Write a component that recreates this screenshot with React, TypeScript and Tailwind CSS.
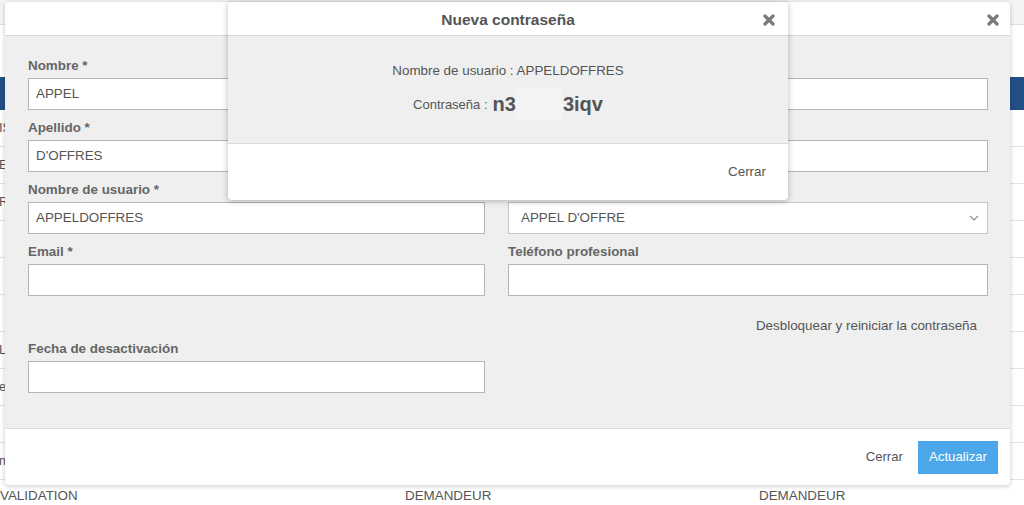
import { ReactNode } from 'react';

const rowTails = ['IS', 'ES', 'R', '', '', '', 'L', 'e', '', 'm'];

function CloseIcon() {
  return (
    <svg width="12" height="12" viewBox="0 0 12 12" aria-hidden="true">
      <path
        d="M2 2 L10 10 M10 2 L2 10"
        stroke="#7a7a7a"
        strokeWidth="3.2"
        strokeLinecap="round"
      />
    </svg>
  );
}

function Field({ label, children }: { label: string; children: ReactNode }) {
  return (
    <div>
      <div className="text-[13.4px] leading-[16px] font-bold text-[#666] mb-[4px] whitespace-nowrap">
        {label}
      </div>
      {children}
    </div>
  );
}

function TextBox({ value = '' }: { value?: string }) {
  return (
    <div className="h-[32px] border border-[#b5b5b5] bg-white px-[7px] flex items-center text-[13.4px] text-[#555]">
      {value}
    </div>
  );
}

function SelectBox({ value }: { value: string }) {
  return (
    <div className="h-[32px] border border-[#c4c4c4] bg-white pl-[12px] pr-[8px] flex items-center justify-between text-[13.4px] text-[#555]">
      <span>{value}</span>
      <svg width="10" height="6" viewBox="0 0 10 6" aria-hidden="true">
        <polyline points="1,1 5,5 9,1" fill="none" stroke="#8a8a8a" strokeWidth="1.1" />
      </svg>
    </div>
  );
}

export default function App() {
  return (
    <div
      className="relative w-[1024px] h-[505px] overflow-hidden bg-white text-[#555]"
      style={{ fontFamily: '"Liberation Sans", Arial, sans-serif' }}
    >
      {/* Page underneath the dialogs */}
      <div className="flex flex-col">
        <div className="h-[25px] bg-[#f4f4f4] border-b border-[#e0e0e0]" />
        <div className="h-[52px]" />
        <div className="h-[33px] bg-[#234f86]" />
        {rowTails.map((tail, i) => (
          <div key={i} className="h-[37px] border-b border-[#e2e2e2] flex items-center text-[13px]">
            {tail && <span className="-ml-px whitespace-nowrap">{tail}</span>}
          </div>
        ))}
        <div className="h-[32px] flex items-center text-[13.4px] text-[#555]">
          <span className="w-[405px]">VALIDATION</span>
          <span className="w-[354px]">DEMANDEUR</span>
          <span>DEMANDEUR</span>
        </div>
      </div>

      {/* Edit user dialog */}
      <div className="absolute left-[5px] top-[2px] w-[1005px] h-[483px] rounded-[4px] bg-white shadow-[0_1px_5px_rgba(0,0,0,0.22)] flex flex-col overflow-hidden">
        <div className="h-[34px] shrink-0 border-b border-[#d8d8d8] flex items-center justify-end pr-[11px] pt-[2px]">
          <CloseIcon />
        </div>
        <div className="flex-1 bg-[#efefef] pl-[23px] pt-[22px]">
          <div className="grid grid-cols-[457px_480px] gap-x-[23px] gap-y-[10px]">
            <Field label="Nombre *">
              <TextBox value="APPEL" />
            </Field>
            <Field label="Cargo">
              <TextBox />
            </Field>
            <Field label="Apellido *">
              <TextBox value="D'OFFRES" />
            </Field>
            <Field label="Empresa">
              <TextBox />
            </Field>
            <Field label="Nombre de usuario *">
              <TextBox value="APPELDOFFRES" />
            </Field>
            <Field label="Perfil *">
              <SelectBox value="APPEL D'OFFRE" />
            </Field>
            <Field label="Email *">
              <TextBox />
            </Field>
            <Field label="Teléfono profesional">
              <TextBox />
            </Field>
          </div>
          <div className="grid grid-cols-[457px_480px] gap-x-[23px] mt-[22px]">
            <div />
            <div className="text-right pr-[11px] text-[13.4px] leading-[16px] text-[#555]">
              Desbloquear y reiniciar la contraseña
            </div>
          </div>
          <div className="w-[457px] mt-[7px]">
            <Field label="Fecha de desactivación">
              <TextBox />
            </Field>
          </div>
        </div>
        <div className="h-[57px] shrink-0 border-t border-[#dcdcdc] flex items-center justify-end gap-[15px] pr-[12px]">
          <span className="text-[13.2px] text-[#555]">Cerrar</span>
          <button className="h-[33px] w-[80px] flex items-center justify-center bg-[#4ba7ea] text-white text-[13.2px]">
            Actualizar
          </button>
        </div>
      </div>

      {/* New password dialog */}
      <div className="absolute left-[228px] top-[2px] w-[560px] h-[198px] rounded-[4px] bg-white shadow-[0_1px_6px_rgba(0,0,0,0.28)] flex flex-col overflow-hidden">
        <div className="h-[34px] shrink-0 border-b border-[#d8d8d8] relative flex items-center justify-center pt-[2px]">
          <span className="text-[15.5px] font-bold text-[#555]">Nueva contraseña</span>
          <span className="absolute right-[13px] top-[12px]">
            <CloseIcon />
          </span>
        </div>
        <div className="h-[107px] shrink-0 bg-[#efefef] flex flex-col items-center pt-[27px]">
          <div className="text-[13.4px] leading-[16px] text-[#555]">Nombre de usuario : APPELDOFFRES</div>
          <div className="mt-[8px] flex items-center h-[34px] text-[#555]">
            <span className="text-[13px] mr-[5px] mt-[2px]">Contraseña :</span>
            <span className="text-[20px] font-bold">n3</span>
            <span className="inline-block w-[47px] h-[34px] bg-[#f3f3f3]" />
            <span className="text-[20px] font-bold">3iqv</span>
          </div>
        </div>
        <div className="flex-1 border-t border-[#dcdcdc] flex items-center justify-end pr-[22px]">
          <span className="text-[13.4px] text-[#555]">Cerrar</span>
        </div>
      </div>
    </div>
  );
}
